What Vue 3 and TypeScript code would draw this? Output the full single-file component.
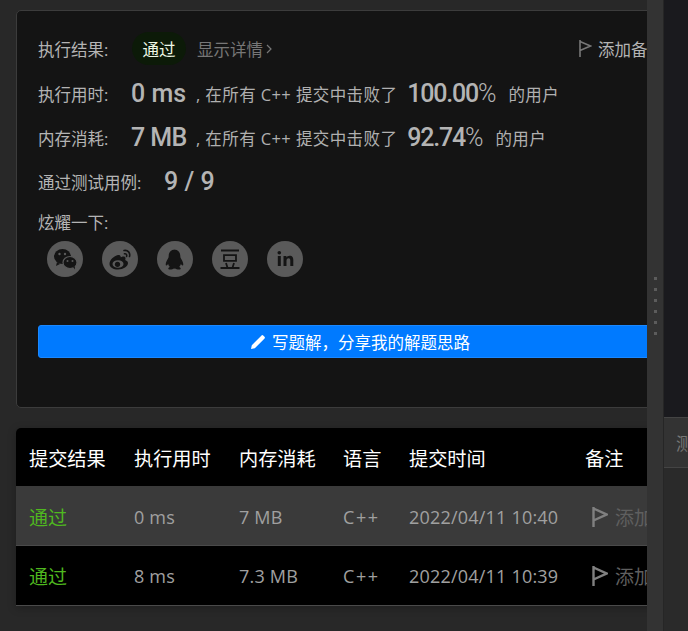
<script setup lang="ts">
interface Row { time: string; mem: string; date: string; active: boolean }
const rows: Row[] = [
  { time: '0 ms', mem: '7 MB', date: '2022/04/11 10:40', active: true },
  { time: '8 ms', mem: '7.3 MB', date: '2022/04/11 10:39', active: false },
]
</script>

<template>
  <div class="page">
    <main class="left">
      <section class="card">
        <div class="line result-line">
          <span class="label">执行结果:</span>
          <span class="pill">通过</span>
          <span class="details">显示详情<svg class="chev" viewBox="0 0 8 12" width="8" height="12"><path d="M2 2l4 4-4 4" fill="none" stroke="currentColor" stroke-width="1.2"/></svg></span>
          <span class="note">
            <svg class="flag" viewBox="0 0 13 17" width="13" height="17"><path d="M1 0v17M1 1.500l10.500 4.500-10.500 4.500" fill="none" stroke="currentColor" stroke-width="1.600"/></svg>
            添加备注
          </span>
        </div>
        <div class="line stat-line">
          <span class="label">执行用时:</span>
          <strong class="big">0 ms</strong>
          <span class="desc">, 在所有 C++ 提交中击败了</span>
          <span class="pct">100.00<small>%</small></span>
          <span class="desc">的用户</span>
        </div>
        <div class="line stat-line mem">
          <span class="label">内存消耗:</span>
          <strong class="big">7 MB</strong>
          <span class="desc">, 在所有 C++ 提交中击败了</span>
          <span class="pct">92.74<small>%</small></span>
          <span class="desc">的用户</span>
        </div>
        <div class="line cases">
          <span class="label">通过测试用例:</span>
          <strong class="big">9 / 9</strong>
        </div>
        <div class="share-title">炫耀一下:</div>
        <div class="share">
          <span class="social">
            <svg viewBox="0 0 36 36" width="36" height="36"><ellipse cx="15.500" cy="15.500" rx="8.500" ry="7.500" fill="#141414"/><path d="M10 21l-1 4 4-2z" fill="#141414"/><ellipse cx="23" cy="21.500" rx="7" ry="6" fill="#141414" stroke="#5a5a5a" stroke-width="1.200"/><path d="M26 26l2 2.500-.3-3.500z" fill="#141414"/><circle cx="12.500" cy="13" r="1.200" fill="#5a5a5a"/><circle cx="18" cy="13" r="1.200" fill="#5a5a5a"/><circle cx="20.500" cy="20" r="1" fill="#5a5a5a"/><circle cx="25.500" cy="20" r="1" fill="#5a5a5a"/></svg>
          </span>
          <span class="social">
            <svg viewBox="0 0 36 36" width="36" height="36"><path d="M16 14c-4 .8-8.500 5-8.500 9 0 3.500 4 5.500 8.500 5.500 5.500 0 10-3 10-6.500 0-2-2-2.500-2.800-3 .8-2 .3-3.500-1.500-3.500-1.500 0-3 .8-3 .8s.5-2.300-2.700-2.300z" fill="#141414"/><ellipse cx="16" cy="23" rx="5.500" ry="3.800" fill="#5a5a5a"/><circle cx="15.500" cy="23.300" r="2.600" fill="#141414"/><path d="M22 9.500c4-.8 6.500 2.500 5.500 6M22.500 12.800c1.800-.3 2.500 1 2.100 2.600" fill="none" stroke="#141414" stroke-width="1.600" stroke-linecap="round"/></svg>
          </span>
          <span class="social">
            <svg viewBox="0 0 36 36" width="36" height="36"><path d="M18 8.500c-4.200 0-6.300 3-6.300 6.500 0 1-.2 1.800-.8 2.800-1.500 2.400-2.400 4.500-2.100 6.200.4 1.300 1.600.2 2.300-.9.300 1.200 1 2.200 1.800 2.900-1.300.5-1.800 1.200-1.500 1.900.5 1 3.800.8 5.400-.3.400.1 1 .1 1.400 0 1.600 1.100 4.900 1.300 5.400.3.300-.7-.2-1.400-1.500-1.900.8-.7 1.500-1.700 1.800-2.900.7 1.100 1.900 2.200 2.300.9.300-1.700-.6-3.800-2.100-6.200-.6-1-.8-1.800-.8-2.800 0-3.500-2.100-6.500-6.300-6.500z" fill="#141414"/></svg>
          </span>
          <span class="social">
            <svg viewBox="0 0 36 36" width="36" height="36"><g fill="none" stroke="#141414" stroke-width="1.800"><path d="M9 9.500h18M12 14.200h12v5.600H12zM14 22l1.500 4.700M22 22l-1.500 4.700M8.500 27h19"/></g></svg>
          </span>
          <span class="social">
            <svg viewBox="0 0 36 36" width="36" height="36"><rect x="10.800" y="15" width="3" height="10" fill="#141414"/><circle cx="12.300" cy="11.800" r="1.800" fill="#141414"/><path d="M16.500 15h2.900v1.500c.6-1 1.800-1.800 3.200-1.800 3 0 3.700 2 3.700 4.500V25h-3v-5.200c0-1.300-.3-2.500-1.700-2.500s-2.100 1.100-2.100 2.500V25h-3z" fill="#141414"/></svg>
          </span>
        </div>
        <button class="write" type="button">
          <svg viewBox="0 0 16 16" width="16" height="16"><path d="M1 15l.8-3.800L10.600 2.400l3 3L4.800 14.200zM11.500 1.500a1.200 1.200 0 0 1 1.700 0l1.300 1.300a1.200 1.200 0 0 1 0 1.700l-.9.900-3-3z" fill="#fff"/></svg>
          写题解，分享我的解题思路
        </button>
      </section>

      <section class="table">
        <div class="tr head">
          <span class="c1">提交结果</span><span class="c2">执行用时</span><span class="c3">内存消耗</span><span class="c4">语言</span><span class="c5">提交时间</span><span class="c6">备注</span>
        </div>
        <div v-for="r in rows" :key="r.date" class="tr body" :class="{ active: r.active }">
          <span class="c1 ok">通过</span>
          <span class="c2">{{ r.time }}</span>
          <span class="c3">{{ r.mem }}</span>
          <span class="c4 lang">C++</span>
          <span class="c5">{{ r.date }}</span>
          <span class="c6 add">
            <svg viewBox="0 0 16 22" width="16" height="22"><path d="M1.500 1v20M1.500 2.500l13 6-13 6" fill="none" stroke="currentColor" stroke-width="2.400"/></svg>
            <em>添加备注</em>
          </span>
        </div>
      </section>
    </main>

    <div class="gutter"><i v-for="n in 6" :key="n"></i></div>

    <aside class="right">
      <div class="editor"></div>
      <div class="tabs"><span>测试用例</span></div>
      <div class="rest"></div>
    </aside>
  </div>
</template>

<style>
html, body { margin: 0; background: #282828; }
</style>

<style scoped>
.page {
  display: flex;
  width: 688px;
  height: 631px;
  overflow: hidden;
  background: #282828;
  font-family: "Open Sans", "Noto Sans CJK SC", sans-serif;
}
.left {
  flex: 0 0 647px;
  width: 647px;
  overflow: hidden;
  padding: 10px 0 0 16px;
  box-sizing: border-box;
}
.card {
  width: 700px;
  height: 398px;
  box-sizing: border-box;
  background: #141414;
  border: 1px solid #3c3c3c;
  border-radius: 5px;
  padding: 23px 0 0 21px;
  color: #b0b0b0;
  font-size: 16.5px;
}
.line { display: flex; align-items: center; white-space: nowrap; }
.result-line { height: 29px; width: 626px; }
.label { color: #b4b4b4; }
.result-line .label { width: 94px; flex: none; }
.pill {
  width: 54px;
  height: 33px;
  border-radius: 17px;
  background: #0c1a08;
  color: #eef8e6;
  display: flex;
  align-items: center;
  justify-content: center;
  flex: none;
}
.details { margin-left: 11px; color: #777; display: inline-flex; align-items: center; gap: 2px; }
.note { margin-left: auto; color: #b4b4b4; display: inline-flex; align-items: center; gap: 6px; flex: none; }
.flag { flex: none; color: #777; }
.stat-line { margin-top: 16px; height: 29px; }
.stat-line.mem { margin-top: 15px; }
.stat-line .label { width: 93px; flex: none; }
.big { font-family: Roboto, sans-serif; font-weight: 500; font-size: 25px; color: #b4b4b4; letter-spacing: 0; }
.stat-line .big { width: 65px; flex: none; }
.mem .big { letter-spacing: -.6px; }
.desc { color: #b0b0b0; letter-spacing: .4px; }
.pct { font-family: Roboto, sans-serif; font-weight: 500; font-size: 25px; color: #b4b4b4; margin: 0 13px 0 10px; letter-spacing: -1.2px; }
.pct small { font-size: 25px; font-weight: 300; }
.cases { margin-top: 15px; height: 29px; }
.cases .label { width: 126px; flex: none; }
.share-title { margin-top: 17px; height: 20px; line-height: 20px; color: #b4b4b4; }
.share { display: flex; gap: 19px; margin: 8px 0 0 9px; }
.social { width: 36px; height: 36px; border-radius: 50%; background: #5a5a5a; display: block; }
.social svg { display: block; }
.write {
  display: flex;
  align-items: center;
  justify-content: center;
  gap: 6px;
  width: 644px;
  height: 33px;
  margin-top: 48px;
  padding: 0;
  border: 1px solid #1a88ff;
  border-radius: 3px;
  background: #007aff;
  color: #fff;
  font: inherit;
}
.table {
  width: 700px;
  margin-top: 20px;
  background: #000;
  border-radius: 5px 0 0 0;
  box-shadow: 0 2px 8px rgba(0, 0, 0, .25);
  font-size: 18px;
}
.tr { display: flex; align-items: center; white-space: nowrap; box-sizing: border-box; padding-top: 1px; }
.head { height: 59px; color: #fff; font-size: 19.2px; border-bottom: 1px solid #3a3a3a; }
.body { height: 59px; color: #a0a0a0; border-bottom: 1px solid #4a4a4a; background: #000; letter-spacing: .2px; }
.body:last-child { height: 60px; }
.body.active { background: #3a3a3a; }
.c1, .c2, .c3, .c4, .c5, .c6 { box-sizing: border-box; padding-left: 13px; flex: none; }
.c1 { width: 105px; }
.c2 { width: 105px; }
.c3 { width: 104px; }
.c4 { width: 66px; }
.c5 { width: 176px; }
.c6 { width: 144px; }
.lang { letter-spacing: 1.6px; }
.ok { color: #4fb81f; font-size: 19px; letter-spacing: 0; }
.add { display: flex; align-items: center; gap: 7px; color: #808080; padding-left: 20px; }
.add em { font-style: normal; font-size: 19px; color: #5f5f5f; letter-spacing: 0; }
.gutter {
  flex: 0 0 16px;
  background: #333;
  display: flex;
  flex-direction: column;
  align-items: center;
  gap: 8px;
  padding-top: 277px;
  box-sizing: border-box;
}
.gutter i { width: 3px; height: 3px; background: #5c5c5c; display: block; }
.right { flex: 1; display: flex; flex-direction: column; border-left: 1px solid #262626; overflow: hidden; }
.editor { height: 417px; background: #1a1a1e; flex: none; }
.tabs {
  height: 51px;
  flex: none;
  box-sizing: border-box;
  background: #333;
  border-top: 1px solid #444;
  border-bottom: 1px solid #444;
  color: #777;
  font-size: 16.5px;
  display: flex;
  align-items: center;
  padding-left: 12px;
  white-space: nowrap;
}
.rest { flex: 1; background: #2a2a2a; }
</style>
